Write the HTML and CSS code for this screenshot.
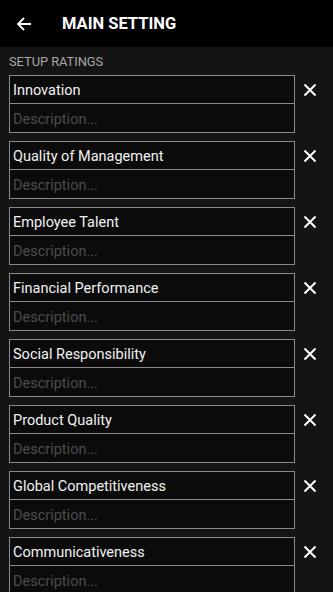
FILE: index.html
```html
<!DOCTYPE html>
<html lang="en">
<head>
    <meta charset="UTF-8">
    <meta name="viewport" content="width=device-width, initial-scale=1.0">
    <title>Main Setting</title>
    <link rel="stylesheet" href="styles.css">
</head>
<body>

<div class="top-bar">
    <svg class="back-icon" width="16" height="16" viewBox="0 0 16 16">
        <path d="M15 8H2M8 2L2 8l6 6" fill="none" stroke="#fff" stroke-width="1.8"/>
    </svg>
    <h1>MAIN SETTING</h1>
</div>

<div class="content">
    <div class="section-title">SETUP RATINGS</div>

    <div class="rating-item">
        <div class="rating-box">
            <input type="text" class="rating-name" value="Innovation">
            <input type="text" class="rating-desc" placeholder="Description...">
        </div>
        <button class="remove-button"><svg width="14" height="14" viewBox="0 0 14 14"><path d="M1.5 1.5l11 11M12.5 1.5l-11 11" stroke="#fff" stroke-width="2"/></svg></button>
    </div>

    <div class="rating-item">
        <div class="rating-box">
            <input type="text" class="rating-name" value="Quality of Management">
            <input type="text" class="rating-desc" placeholder="Description...">
        </div>
        <button class="remove-button"><svg width="14" height="14" viewBox="0 0 14 14"><path d="M1.5 1.5l11 11M12.5 1.5l-11 11" stroke="#fff" stroke-width="2"/></svg></button>
    </div>

    <div class="rating-item">
        <div class="rating-box">
            <input type="text" class="rating-name" value="Employee Talent">
            <input type="text" class="rating-desc" placeholder="Description...">
        </div>
        <button class="remove-button"><svg width="14" height="14" viewBox="0 0 14 14"><path d="M1.5 1.5l11 11M12.5 1.5l-11 11" stroke="#fff" stroke-width="2"/></svg></button>
    </div>

    <div class="rating-item">
        <div class="rating-box">
            <input type="text" class="rating-name" value="Financial Performance">
            <input type="text" class="rating-desc" placeholder="Description...">
        </div>
        <button class="remove-button"><svg width="14" height="14" viewBox="0 0 14 14"><path d="M1.5 1.5l11 11M12.5 1.5l-11 11" stroke="#fff" stroke-width="2"/></svg></button>
    </div>

    <div class="rating-item">
        <div class="rating-box">
            <input type="text" class="rating-name" value="Social Responsibility">
            <input type="text" class="rating-desc" placeholder="Description...">
        </div>
        <button class="remove-button"><svg width="14" height="14" viewBox="0 0 14 14"><path d="M1.5 1.5l11 11M12.5 1.5l-11 11" stroke="#fff" stroke-width="2"/></svg></button>
    </div>

    <div class="rating-item">
        <div class="rating-box">
            <input type="text" class="rating-name" value="Product Quality">
            <input type="text" class="rating-desc" placeholder="Description...">
        </div>
        <button class="remove-button"><svg width="14" height="14" viewBox="0 0 14 14"><path d="M1.5 1.5l11 11M12.5 1.5l-11 11" stroke="#fff" stroke-width="2"/></svg></button>
    </div>

    <div class="rating-item">
        <div class="rating-box">
            <input type="text" class="rating-name" value="Global Competitiveness">
            <input type="text" class="rating-desc" placeholder="Description...">
        </div>
        <button class="remove-button"><svg width="14" height="14" viewBox="0 0 14 14"><path d="M1.5 1.5l11 11M12.5 1.5l-11 11" stroke="#fff" stroke-width="2"/></svg></button>
    </div>

    <div class="rating-item">
        <div class="rating-box">
            <input type="text" class="rating-name" value="Communicativeness">
            <input type="text" class="rating-desc" placeholder="Description...">
        </div>
        <button class="remove-button"><svg width="14" height="14" viewBox="0 0 14 14"><path d="M1.5 1.5l11 11M12.5 1.5l-11 11" stroke="#fff" stroke-width="2"/></svg></button>
    </div>
</div>

</body>
</html>
```

FILE: styles.css
```css
body {
    font-family: Roboto, 'Noto Sans', sans-serif;
    background-color: #141414;
    color: white;
    margin: 0;
    padding: 0;
    overflow: hidden;
}
.top-bar {
    display: flex;
    align-items: center;
    height: 47px;
    background-color: #000;
    padding-left: 16px;
}
.back-icon {
    display: block;
}
.top-bar h1 {
    margin: 0 0 0 30px;
    font-size: 16.5px;
    font-weight: bold;
}
.content {
    padding: 8px 0 0 9px;
}
.section-title {
    color: #a8a8a8;
    font-size: 12.8px;
    height: 20px;
    line-height: 14px;
}
.rating-item {
    display: flex;
    align-items: flex-start;
    margin-bottom: 8px;
}
.rating-box {
    width: 286px;
    display: flex;
    flex-direction: column;
}
.rating-box input {
    box-sizing: border-box;
    width: 100%;
    height: 29px;
    margin: 0;
    padding: 1px 3px 0;
    background-color: #0b0b0b;
    border: 1.5px solid #8a8a8a;
    font-family: Roboto, 'Noto Sans', sans-serif;
    font-size: 14.5px;
    color: #f2f2f2;
    outline: none;
}
.rating-box .rating-desc {
    border-top: none;
    padding-top: 3px;
}
.rating-desc::placeholder {
    color: #4c4c4c;
}
.remove-button {
    background: none;
    border: none;
    padding: 0;
    margin: 8px 0 0 8px;
    width: 14px;
    height: 14px;
    cursor: pointer;
}
.remove-button svg {
    display: block;
}
```
